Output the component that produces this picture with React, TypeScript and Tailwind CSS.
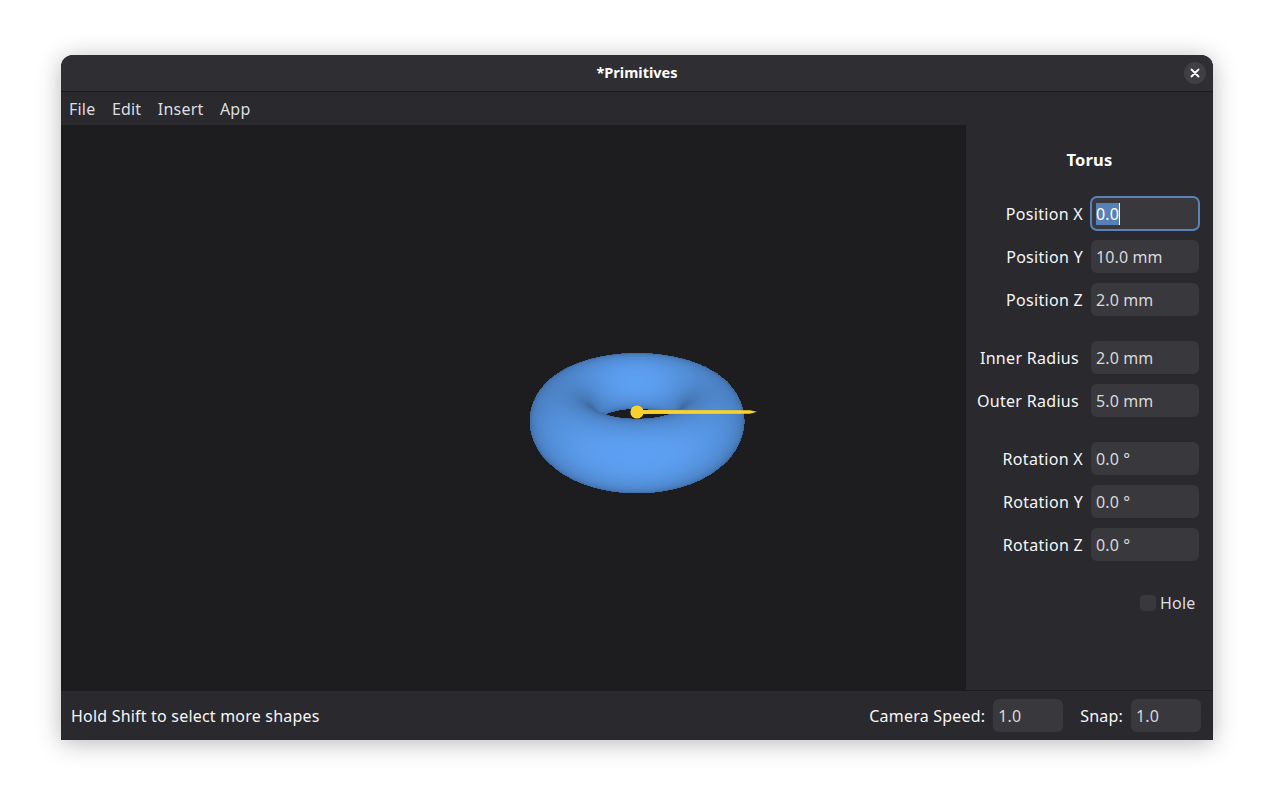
import React, { useMemo } from "react";

const OX = 61;
const OY = 125;

function buildTorus() {
  const R = 0.7, r = 0.3, th = (30 * Math.PI) / 180;
  const D = 4.2, f = 104.5 * 4.2, cx = 637 - OX, cy = 413 - OY;
  const NU = 160, NV = 80;
  const pt = (u: number, v: number) => {
    const x = (R + r * Math.cos(v)) * Math.cos(u);
    const y = (R + r * Math.cos(v)) * Math.sin(u);
    const z = r * Math.sin(v);
    const yy = y * Math.sin(th) + z * Math.cos(th);
    const zz = -y * Math.cos(th) + z * Math.sin(th);
    const k = f / (D - zz);
    return { sx: cx + x * k, sy: cy - yy * k, zz, x, yy };
  };
  const out: { d: string; c: string; z: number }[] = [];
  for (let i = 0; i < NU; i++) {
    for (let j = 0; j < NV; j++) {
      const u = ((i + 0.5) / NU) * Math.PI * 2;
      const v = ((j + 0.5) / NV) * Math.PI * 2;
      const nx = Math.cos(v) * Math.cos(u);
      const ny = Math.cos(v) * Math.sin(u);
      const nz = Math.sin(v);
      const nyy = ny * Math.sin(th) + nz * Math.cos(th);
      const nzz = -ny * Math.cos(th) + nz * Math.sin(th);
      const c = pt(u, v);
      const vl = Math.hypot(c.x, c.yy, D - c.zz);
      const dot = (nx * c.x * -1 + nyy * c.yy * -1 + nzz * (D - c.zz)) / vl;
      if (dot <= -0.02) continue;
      const s = 0.58 + 0.39 * Math.pow(Math.max(0, dot), 0.7);
      const col = `rgb(${Math.round(96 * s)},${Math.round(165 * s)},${Math.round(250 * s)})`;
      const a = pt((i / NU) * Math.PI * 2, (j / NV) * Math.PI * 2);
      const b = pt(((i + 1) / NU) * Math.PI * 2, (j / NV) * Math.PI * 2);
      const e = pt(((i + 1) / NU) * Math.PI * 2, ((j + 1) / NV) * Math.PI * 2);
      const g = pt((i / NU) * Math.PI * 2, ((j + 1) / NV) * Math.PI * 2);
      out.push({
        d: [a, b, e, g].map((p) => `${p.sx.toFixed(1)},${p.sy.toFixed(1)}`).join(" "),
        c: col,
        z: c.zz,
      });
    }
  }
  out.sort((p, q) => p.z - q.z);
  return out;
}

function Viewport() {
  const polys = useMemo(buildTorus, []);
  return (
    <div className="flex-1 min-w-0 bg-[#1d1d20]">
      <svg className="block w-full h-full" viewBox="0 0 905 565">
        <g shapeRendering="crispEdges">
          {polys.map((p, i) => (
            <polygon key={i} points={p.d} fill={p.c} stroke={p.c} strokeWidth={0.7} />
          ))}
        </g>
        <polygon points="579,285 689,285.3 696,286.8 689,288.7 579,289" fill="#fad22d" />
        <circle cx="576" cy="287" r="6.6" fill="#fad22d" />
      </svg>
    </div>
  );
}

function Field({ label, value, pr = "" }: { label: string; value: string; pr?: string }) {
  return (
    <div className="flex items-center justify-end gap-2">
      <span className={`text-[#f6f6f7] tracking-[0.3px] ${pr}`}>{label}</span>
      <div className="w-[108px] h-[33px] rounded-md bg-[#39393d] px-[5px] flex items-center tracking-[0.1px] text-[#d8d8da]">{value}</div>
    </div>
  );
}

export default function App() {
  return (
    <div className="w-[1274px] h-[807px] bg-white pt-[55px] pl-[61px] overflow-hidden" style={{ fontFamily: '"Noto Sans", sans-serif' }}>
      <div className="w-[1152px] h-[685px] flex flex-col rounded-t-[12px] bg-[#29292e] shadow-[0_3px_24px_rgba(0,0,0,0.28)] text-base tracking-[0.2px] overflow-hidden">
        <header className="relative h-[37px] shrink-0 bg-[#2e2e33] border-b border-[#1c1c20] flex items-center justify-center">
          <span className="font-bold text-[14.5px] tracking-normal text-white">*Primitives</span>
          <button className="absolute right-[7px] top-[7px] w-[22px] h-[22px] rounded-full bg-[#3f3f44] flex items-center justify-center">
            <svg width="10" height="10" viewBox="0 0 10 10"><path d="M1.5 1.5 8.5 8.5M8.5 1.5 1.5 8.5" stroke="#fff" strokeWidth="1.9" strokeLinecap="round" /></svg>
          </button>
        </header>
        <nav className="h-[33px] shrink-0 bg-[#29292e] flex items-center gap-[16.5px] px-2 tracking-[0.2px] text-[#dedee0]">
          <span>File</span><span>Edit</span><span>Insert</span><span>App</span>
        </nav>
        <main className="flex-1 min-h-0 flex">
          <Viewport />
          <aside className="w-[247px] shrink-0 bg-[#29292e] pr-[14px] flex flex-col">
            <div className="pl-[14px] pt-[23px] pb-[25px] text-center font-bold text-[16.5px] text-white leading-[24px]">Torus</div>
            <div className="flex flex-col gap-[10px]">
              <div className="flex items-center justify-end gap-2">
                <span className="text-[#f6f6f7] tracking-[0.3px]">Position X</span>
                <div className="w-[108px] h-[33px] rounded-md bg-[#39393d] outline-2 -outline-offset-1 outline-[#5a82b8] px-[5px] flex items-center text-white">
                  <span className="bg-[#5680b8] h-[22px] flex items-center border-r border-white">0.0</span>
                </div>
              </div>
              <Field label="Position Y" value="10.0 mm" />
              <Field label="Position Z" value="2.0 mm" />
            </div>
            <div className="flex flex-col gap-[10px] mt-[25px]">
              <Field label="Inner Radius" value="2.0 mm" pr="mr-1" />
              <Field label="Outer Radius" value="5.0 mm" pr="mr-1" />
            </div>
            <div className="flex flex-col gap-[10px] mt-[25px]">
              <Field label="Rotation X" value="0.0 °" />
              <Field label="Rotation Y" value="0.0 °" />
              <Field label="Rotation Z" value="0.0 °" />
            </div>
            <div className="flex items-center justify-end gap-1 mt-[30px] pr-[3.5px] text-[#dedee0]">
              <span className="w-4 h-4 rounded bg-[#39393d]" />
              <span>Hole</span>
            </div>
          </aside>
        </main>
        <footer className="h-[50px] shrink-0 bg-[#29292e] border-t border-[#1c1c20] flex items-center pl-[10px] pr-3">
          <span className="text-[#f6f6f7]">Hold Shift to select more shapes</span>
          <div className="ml-auto flex items-center gap-2">
            <span className="text-[#f6f6f7]">Camera Speed:</span>
            <div className="w-[70px] h-[33px] rounded-md bg-[#39393d] px-[5px] flex items-center text-[#d8d8da]">1.0</div>
            <span className="text-[#f6f6f7] ml-[9px]">Snap:</span>
            <div className="w-[70px] h-[33px] rounded-md bg-[#39393d] px-[5px] flex items-center text-[#d8d8da]">1.0</div>
          </div>
        </footer>
      </div>
    </div>
  );
}
